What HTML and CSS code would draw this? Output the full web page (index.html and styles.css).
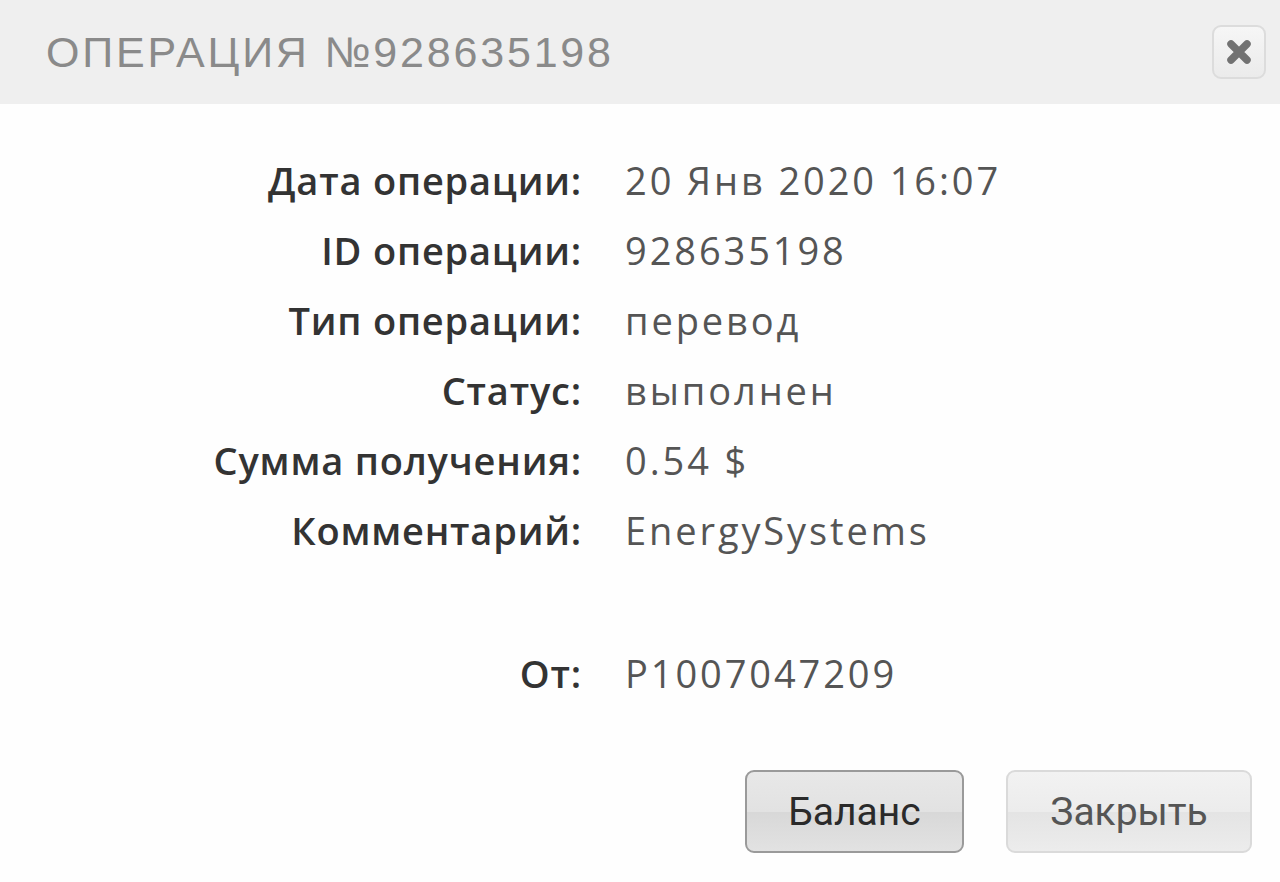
FILE: index.html
```html
<!DOCTYPE html>
<html lang="ru">
<head>
    <meta charset="UTF-8">
    <meta name="viewport" content="width=device-width, initial-scale=1.0">
    <title>Операция №928635198</title>
    <link rel="stylesheet" href="styles.css">
</head>
<body>
    <div class="modal">
        <div class="modal-header">
            <h1 class="modal-title">ОПЕРАЦИЯ №928635198</h1>
            <button type="button" class="close-btn" aria-label="Закрыть">
                <svg width="30" height="30" viewBox="0 0 30 30">
                    <path d="M7 7 L23 23 M23 7 L7 23" stroke="#727272" stroke-width="7.5" stroke-linecap="round"/>
                </svg>
            </button>
        </div>

        <div class="details">
            <div class="label">Дата операции:</div>
            <div class="value">20 Янв 2020 16:07</div>

            <div class="label">ID операции:</div>
            <div class="value">928635198</div>

            <div class="label">Тип операции:</div>
            <div class="value">перевод</div>

            <div class="label">Статус:</div>
            <div class="value">выполнен</div>

            <div class="label">Сумма получения:</div>
            <div class="value">0.54 $</div>

            <div class="label">Комментарий:</div>
            <div class="value">EnergySystems</div>

            <div class="spacer"></div>

            <div class="label">От:</div>
            <div class="value">P1007047209</div>
        </div>

        <div class="modal-footer">
            <button type="button" class="btn btn-primary">Баланс</button>
            <button type="button" class="btn">Закрыть</button>
        </div>
    </div>
</body>
</html>
```

FILE: styles.css
```css
html, body {
    margin: 0;
    padding: 0;
    background: #fefefe;
}

.modal {
    width: 1280px;
    height: 882px;
    display: flex;
    flex-direction: column;
}

.modal-header {
    height: 104px;
    background-color: #efefef;
    display: flex;
    align-items: center;
    justify-content: space-between;
    padding: 0 14px 0 46px;
    box-sizing: border-box;
}

.modal-title {
    margin: 0;
    font-family: "Liberation Sans", Arial, sans-serif;
    font-weight: normal;
    font-size: 43px;
    letter-spacing: 2.8px;
    color: #8a8a8a;
}

.close-btn {
    width: 54px;
    height: 54px;
    border: 2px solid #dcdcdc;
    border-radius: 9px;
    background: linear-gradient(#f6f6f6, #ebebeb);
    display: flex;
    align-items: center;
    justify-content: center;
    padding: 0;
    cursor: pointer;
}

.close-btn svg {
    filter: blur(0.6px);
}

.details {
    display: grid;
    grid-template-columns: 582px 1fr;
    grid-template-rows: repeat(6, 70px) 73px 70px;
    column-gap: 43px;
    padding-top: 41px;
    align-items: center;
}

.label {
    text-align: right;
    font-family: "Open Sans", sans-serif;
    font-weight: 600;
    font-size: 38px;
    letter-spacing: 0.8px;
    color: #333333;
}

.value {
    font-family: "Open Sans", sans-serif;
    font-size: 38px;
    letter-spacing: 2.9px;
    color: #555555;
}

.spacer {
    grid-column: 1 / 3;
}

.modal-footer {
    display: flex;
    justify-content: flex-end;
    gap: 42px;
    padding: 62px 28px 0 0;
}

.btn {
    height: 83px;
    width: 246px;
    border: 2px solid #dadada;
    border-radius: 9px;
    background: linear-gradient(#f2f2f2 0%, #ececec 50%, #e4e4e4 51%, #ececec 100%);
    font-family: Roboto, sans-serif;
    font-size: 39px;
    color: #555555;
    cursor: pointer;
}

.btn-primary {
    width: 219px;
    border-color: #9a9a9a;
    background: linear-gradient(#e8e8e8 0%, #e2e2e2 50%, #d8d8d8 51%, #e2e2e2 100%);
    color: #2a2a2a;
}
```
